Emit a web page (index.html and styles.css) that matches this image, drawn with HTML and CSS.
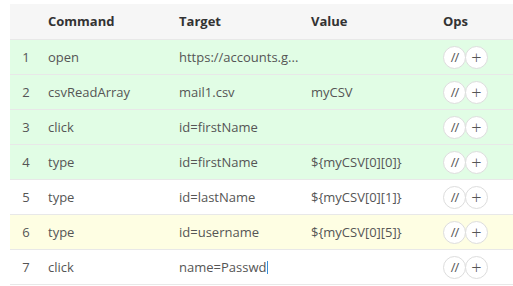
FILE: index.html
```html
<!DOCTYPE html>
<html>
<head>
<title>Commands</title>
<link rel="stylesheet" href="styles.css">
</head>
<body>
<div class="cmd_table">
<table>
<colgroup>
<col class="c_num"><col class="c_cmd"><col class="c_tgt"><col class="c_val"><col class="c_ops">
</colgroup>
<thead>
<tr><th></th><th>Command</th><th>Target</th><th>Value</th><th>Ops</th></tr>
</thead>
<tbody>
<tr class="done"><td class="num">1</td><td>open</td><td>https://accounts.g...</td><td></td><td class="ops"><span class="op">//</span><span class="op plus">+</span></td></tr>
<tr class="done"><td class="num">2</td><td>csvReadArray</td><td>mail1.csv</td><td>myCSV</td><td class="ops"><span class="op">//</span><span class="op plus">+</span></td></tr>
<tr class="done"><td class="num">3</td><td>click</td><td>id=firstName</td><td></td><td class="ops"><span class="op">//</span><span class="op plus">+</span></td></tr>
<tr class="done"><td class="num">4</td><td>type</td><td>id=firstName</td><td>${myCSV[0][0]}</td><td class="ops"><span class="op">//</span><span class="op plus">+</span></td></tr>
<tr><td class="num">5</td><td>type</td><td>id=lastName</td><td>${myCSV[0][1]}</td><td class="ops"><span class="op">//</span><span class="op plus">+</span></td></tr>
<tr class="current"><td class="num">6</td><td>type</td><td>id=username</td><td>${myCSV[0][5]}</td><td class="ops"><span class="op">//</span><span class="op plus">+</span></td></tr>
<tr><td class="num">7</td><td>click</td><td>name=Passwd<span class="caret"></span></td><td></td><td class="ops"><span class="op">//</span><span class="op plus">+</span></td></tr>
</tbody>
</table>
</div>
</body>
</html>
```
FILE: styles.css
```css
*{
  box-sizing: border-box;
}
body {
  margin: 0;
  font-family: "Open Sans", "Noto Sans", sans-serif;
  background: #fff;
}
.cmd_table {
  padding: 4px 0 0 10px;
}
.cmd_table table {
  width: 100%;
  table-layout: fixed;
  border-collapse: collapse;
}
.c_num { width: 30px; }
.c_cmd { width: 131px; }
.c_tgt { width: 132px; }
.c_val { width: 132px; }
.c_ops { width: 78px; }
.cmd_table th {
  height: 35px;
  padding: 0 8px;
  text-align: left;
  font-size: 13px;
  font-weight: 700;
  color: #333;
  background-color: #f6f6f6;
  border-bottom: 1px solid #e8e8e8;
}
.cmd_table td {
  height: 35px;
  padding: 0 8px;
  font-size: 13px;
  color: #555;
  white-space: nowrap;
  overflow: hidden;
  border-bottom: 1px solid #e8e8e8;
}
.cmd_table td.num {
  text-align: center;
  padding: 0 0 0 2px;
}
.cmd_table tr.done td {
  background-color: #e1fde5;
}
.cmd_table tr.current td {
  background-color: #fefee3;
}
.cmd_table td.ops {
  padding: 1px 0 0 8px;
  font-size: 0;
}
.op {
  display: inline-block;
  width: 23px;
  height: 23px;
  line-height: 21px;
  margin-right: -1px;
  border: 1px solid #ddd;
  border-radius: 50%;
  background-color: #fff;
  text-align: center;
  vertical-align: middle;
  font-size: 13px;
  letter-spacing: -1px;
  color: #555;
}
.op.plus {
  font-size: 18px;
  font-weight: 300;
  letter-spacing: 0;
}
.caret {
  display: inline-block;
  width: 1px;
  height: 13px;
  margin-left: 1px;
  vertical-align: -2px;
  background-color: #3a8fd8;
}
```
